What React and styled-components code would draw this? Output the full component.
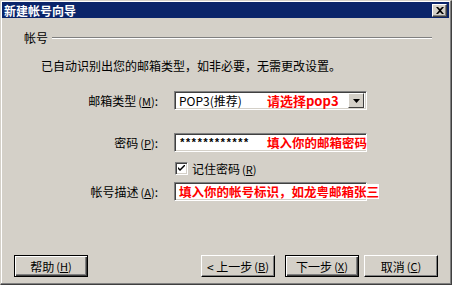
import styled, { createGlobalStyle } from "styled-components";

const GlobalStyle = createGlobalStyle`
html, body {
    margin: 0;
    padding: 0;
    background: #ffffff;
}
* {
    box-sizing: border-box;
}
`

const FONT = `"SimSun", "Noto Sans CJK SC", "DejaVu Sans", sans-serif`

const Window = styled.div`
width: 452px;
height: 285px;
display: flex;
flex-direction: column;
background-color: #d4d0c8;
border-top: 1px solid #d4d0c8;
border-left: 1px solid #d4d0c8;
border-right: 1px solid #404040;
border-bottom: 1px solid #404040;
box-shadow: inset -1px -1px 0 #808080, inset 1px 1px 0 #ffffff;
font-family: ${FONT};
font-size: 12px;
color: #000;
padding: 1px 2px 2px 1px;
`

const TitleBar = styled.div`
height: 16px;
display: flex;
align-items: center;
justify-content: space-between;
background-color: #0a246a;
padding: 0 2px 0 2px;
`

const Title = styled.span`
color: #fff;
font-weight: bold;
font-size: 12px;
`

const CloseBtn = styled.div`
width: 15px;
height: 13px;
display: flex;
align-items: center;
justify-content: center;
background-color: #d4d0c8;
border-top: 1px solid #fff;
border-left: 1px solid #fff;
border-right: 1px solid #404040;
border-bottom: 1px solid #404040;
box-shadow: inset -1px -1px 0 #808080;
`

const Content = styled.div`
flex: 1;
display: flex;
flex-direction: column;
`

const GroupHeader = styled.div`
display: flex;
align-items: center;
gap: 4px;
margin: 11px 17px 0 22px;
`

const GroupLine = styled.div`
flex: 1;
height: 2px;
border-top: 1px solid #808080;
border-bottom: 1px solid #ffffff;
`

const Info = styled.div`
margin: 13px 0 0 39px;
line-height: 14px;
`

const Form = styled.div`
display: grid;
grid-template-columns: 155px 193px;
column-gap: 16px;
align-items: center;
margin: 18px 0 0 1px;
`

const Label = styled.div`
text-align: right;
white-space: nowrap;
margin-top: ${p => p.$mt || 0}px;
`

const Field = styled.div`
height: 19px;
display: flex;
align-items: center;
background-color: #ffffff;
border-top: 1px solid #808080;
border-left: 1px solid #808080;
border-right: 1px solid #ffffff;
border-bottom: 1px solid #ffffff;
box-shadow: inset 1px 1px 0 #404040, inset -1px -1px 0 #d4d0c8;
padding: 0 2px 0 4px;
margin-top: ${p => p.$mt || 0}px;
`

const FieldText = styled.span`
flex-shrink: 0;
white-space: nowrap;
width: 88px;
`

const Note = styled.span`
flex-shrink: 0;
color: #ff0000;
font-weight: bold;
font-size: ${p => p.$size || 13}px;
white-space: nowrap;
background-color: #ffffff;
line-height: 15px;
`

const DropBtn = styled.div`
flex-shrink: 0;
margin-left: auto;
width: 16px;
height: 15px;
display: flex;
align-items: center;
justify-content: center;
background-color: #d4d0c8;
border-top: 1px solid #fff;
border-left: 1px solid #fff;
border-right: 1px solid #404040;
border-bottom: 1px solid #404040;
`

const Stars = styled.span`
flex-shrink: 0;
font-family: "Liberation Mono", monospace;
font-weight: bold;
font-size: 11px;
width: 88px;
letter-spacing: -0.8px;
`

const CheckRow = styled.div`
display: flex;
align-items: center;
gap: 4px;
margin-top: 8px;
padding-left: 1px;
`

const CheckBox = styled.div`
width: 13px;
height: 13px;
display: flex;
align-items: center;
justify-content: center;
background: #fff;
border-top: 1px solid #808080;
border-left: 1px solid #808080;
border-right: 1px solid #fff;
border-bottom: 1px solid #fff;
box-shadow: inset 1px 1px 0 #404040, inset -1px -1px 0 #d4d0c8;
`

const Buttons = styled.div`
margin-top: auto;
display: flex;
align-items: center;
padding: 0 0 5px 12px;
`

const Button = styled.div`
width: 74px;
height: 22px;
display: flex;
align-items: center;
justify-content: center;
background-color: #d4d0c8;
border: 1px solid #000;
border-top-color: ${p => (p.$def ? "#000" : "#ffffff")};
border-left-color: ${p => (p.$def ? "#000" : "#ffffff")};
box-shadow: ${p => (p.$def
    ? "inset 1px 1px 0 #fff, inset -1px -1px 0 #404040, inset -2px -2px 0 #808080"
    : "inset -1px -1px 0 #808080")};
margin-left: ${p => p.$ml || 0}px;
white-space: nowrap;
`

const Key = styled.span`
font-size: 11px;
margin-left: 2px;
`

const App = () => {
    return (
        <>
            <GlobalStyle />
            <Window>
                <TitleBar>
                    <Title>新建帐号向导</Title>
                    <CloseBtn>
                        <svg width="8" height="7" viewBox="0 0 8 7">
                            <path d="M0 0 L2 0 L4 2 L6 0 L8 0 L5 3.5 L8 7 L6 7 L4 5 L2 7 L0 7 L3 3.5 Z" fill="#000" />
                        </svg>
                    </CloseBtn>
                </TitleBar>
                <Content>
                    <GroupHeader>
                        <span>帐号</span>
                        <GroupLine />
                    </GroupHeader>
                    <Info>已自动识别出您的邮箱类型，如非必要，无需更改设置。</Info>
                    <Form>
                        <Label>邮箱类型<Key>(<u>M</u>)</Key>:</Label>
                        <Field>
                            <FieldText>POP3(推荐)</FieldText>
                            <Note>请选择pop3</Note>
                            <DropBtn>
                                <svg width="7" height="4" viewBox="0 0 7 4">
                                    <path d="M0 0 H7 L3.5 4 Z" fill="#000" />
                                </svg>
                            </DropBtn>
                        </Field>

                        <Label $mt={23}>密码<Key>(<u>P</u>)</Key>:</Label>
                        <Field $mt={23}>
                            <Stars>************</Stars>
                            <Note $size={12.5}>填入你的邮箱密码</Note>
                        </Field>

                        <span />
                        <CheckRow>
                            <CheckBox>
                                <svg width="7" height="7" viewBox="0 0 7 7">
                                    <path d="M0 2 L0 4 L2 6 L7 1 L7 -1 L2 4 Z" fill="#000" />
                                </svg>
                            </CheckBox>
                            <span>记住密码<Key>(<u>R</u>)</Key></span>
                        </CheckRow>

                        <Label $mt={5}>帐号描述<Key>(<u>A</u>)</Key>:</Label>
                        <Field $mt={5}>
                            <Note $size={12.5}>填入你的帐号标识，如龙粤邮箱张三</Note>
                        </Field>
                    </Form>
                    <Buttons>
                        <Button $def>帮助<Key>(<u>H</u>)</Key></Button>
                        <Button $ml={113}>&lt; 上一步<Key>(<u>B</u>)</Key></Button>
                        <Button $def $ml={10}>下一步<Key>(<u>X</u>)</Key></Button>
                        <Button $ml={5}>取消<Key>(<u>C</u>)</Key></Button>
                    </Buttons>
                </Content>
            </Window>
        </>
    )
};

export default App;
